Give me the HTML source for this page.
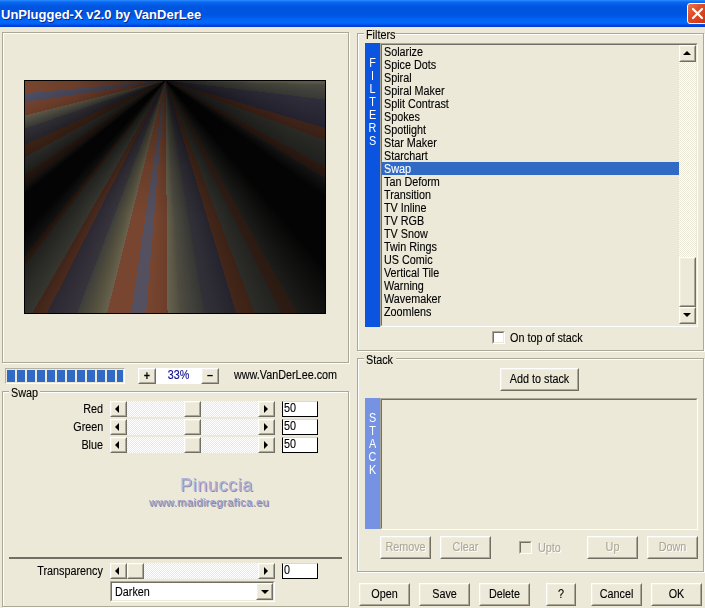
<!DOCTYPE html>
<html>
<head>
<meta charset="utf-8">
<title>UnPlugged-X v2.0 by VanDerLee</title>
<style>
html,body{margin:0;padding:0;}
body{width:705px;height:608px;overflow:hidden;background:#ece9d8;position:relative;
  font-family:"Liberation Sans",sans-serif;font-size:12px;color:#000;line-height:13px;}
body *{position:absolute;box-sizing:border-box;}
#title{left:0;top:0;width:705px;height:27px;
  background:linear-gradient(to bottom,#2b8cff 0px,#0a6af0 2px,#0560e8 4px,#0055e0 7px,#0055e0 15px,#0064f4 19px,#0068fa 23px,#0050e6 25px,#003ad6 26px,#0038d0 27px);}
#title span{left:1px;top:6.5px;color:#fff;font-weight:bold;font-size:13px;line-height:16px;white-space:nowrap;text-shadow:1px 1px 0 #0a2a90;}
#close{left:687px;top:3px;width:21px;height:21px;border:1px solid #fff;border-radius:3px;
  background:linear-gradient(135deg,#ea7650 0%,#e04c26 40%,#c83410 100%);}
.grp{border:1px solid #fff;}
.grp:before{content:"";position:absolute;left:-2px;top:-2px;right:0;bottom:0;border:1px solid #aca899;}
.lbl{background:#ece9d8;height:13px;}
.t{-webkit-text-stroke:0.12px currentColor;white-space:nowrap;transform:scaleX(0.9);transform-origin:0 50%;height:13px;}
.r{transform-origin:100% 50%;text-align:right;}
.c{transform-origin:50% 50%;text-align:center;left:0;right:0;}
.btn{background:#ece9d8;border:1px solid;border-color:#fff #716f64 #716f64 #fff;}
.btn:before{content:"";position:absolute;left:0;top:0;right:0;bottom:0;border:1px solid;border-color:#f1efe2 #aca899 #aca899 #f1efe2;}
.dis .t{color:#aca899;text-shadow:1px 1px 0 #fff;}
.sunk{border:1px solid;border-color:#aca899 #fff #fff #aca899;}
.sunk:before{content:"";position:absolute;left:0;top:0;right:0;bottom:0;border:1px solid;border-color:#716f64 #ece9d8 #ece9d8 #716f64;}
.track{background:repeating-conic-gradient(#fff 0% 25%, #ece9d8 0% 50%) 0 0/2px 2px;}
.edit{background:#fff;border:1px solid #000;border-top-color:#dddacb;width:36px;height:16px;}
.edit .t{left:1px;top:0px;}
.al{width:0;height:0;border-style:solid;border-width:4px 4px 4px 0;border-color:transparent #000 transparent transparent;}
.ar{width:0;height:0;border-style:solid;border-width:4px 0 4px 4px;border-color:transparent transparent transparent #000;}
.au{width:0;height:0;border-style:solid;border-width:0 4px 4px 4px;border-color:transparent transparent #000 transparent;}
.ad{width:0;height:0;border-style:solid;border-width:4px 4px 0 4px;border-color:#000 transparent transparent transparent;}
.v{color:#fff;left:0;width:15px;text-align:center;transform:scaleX(0.9);height:13px;}
.chk{width:13px;height:13px;background:#fff;border:1px solid;border-color:#aca899 #fff #fff #aca899;}
.chk:before{content:"";position:absolute;left:0;top:0;right:0;bottom:0;border:1px solid;border-color:#716f64 #ece9d8 #ece9d8 #716f64;}
</style>
</head>
<body>
<div id="title"><span>UnPlugged-X v2.0 by VanDerLee</span>
<div id="close"><svg style="left:0;top:0" width="19" height="19" viewBox="0 0 19 19"><path d="M5 5 L14 14 M14 5 L5 14" stroke="#fff" stroke-width="2.2" stroke-linecap="round"/></svg></div></div>
<div class="grp" style="left:3px;top:33px;width:347px;height:331px;"></div>
<div id="pv" style="left:24px;top:80px;width:302px;height:234px;background:#000;overflow:hidden;"><div id="rays" style="left:1px;top:1px;width:300px;height:232px;filter:blur(0.7px);background:radial-gradient(circle at 140.5px -0.5px, rgba(0,0,0,0.6) 0px, rgba(0,0,0,0.35) 40px, rgba(0,0,0,0.12) 90px, rgba(0,0,0,0) 140px), conic-gradient(from 90deg at 140.5px -0.5px, #615c48 0deg, #565240 1.4deg, #4a4a40 1.4deg, #383836 6.8deg, #302e3a 6.8deg, #24222e 16.6deg, #40241a 16.6deg, #3a2014 20.5deg, #2a2a26 20.5deg, #20201e 28.3deg, #2c1a12 28.3deg, #22140e 31.5deg, #141414 31.5deg, #050505 36deg, #040404 36deg, #040404 50deg, #050505 50deg, #1c1c1a 60.5deg, #2a1a12 60.5deg, #2e1c14 63.5deg, #222220 63.5deg, #2c2c28 69deg, #3c2216 69deg, #44261a 73.1deg, #25232d 73.1deg, #333138 80.6deg, #363634 80.6deg, #504e42 86.7deg, #545142 86.7deg, #68624e 89.5deg, #6c3e2a 89.5deg, #784630 94.8deg, #55505f 94.8deg, #55505f 98.4deg, #784630 98.4deg, #784630 104.1deg, #68624e 104.1deg, #56523f 106.8deg, #56523f 106.8deg, #3e3e3a 110.8deg, #38343c 110.8deg, #2c2832 117deg, #4a2a1c 117deg, #40241a 119.8deg, #363630 119.8deg, #20201e 127.2deg, #2a1a10 127.2deg, #1e120c 128.8deg, #121212 128.8deg, #040404 133deg, #040404 133deg, #040404 141deg, #040404 141deg, #121212 143.3deg, #1a100b 143.3deg, #261810 146.5deg, #1e1e1c 146.5deg, #2a2a28 151.4deg, #341e12 151.4deg, #3a2216 155.5deg, #25232a 155.5deg, #323036 161.1deg, #383836 161.1deg, #5e5a48 166deg, #6a3c28 166deg, #744230 171.2deg, #4a4a60 171.2deg, #504e62 174.8deg, #784630 174.8deg, #784630 180deg, #000 180deg, #000 360deg);"></div></div>
<div style="left:5px;top:368px;width:120px;height:16px;border:1px solid;border-color:#b5b19f #fff #fff #b5b19f;"></div>
<div style="left:7px;top:370px;width:116px;height:12px;background:repeating-linear-gradient(to right,#316ac5 0,#316ac5 8px,transparent 8px,transparent 10px);"></div>
<div class="btn" style="left:138px;top:368px;width:18px;height:16px;"><span class="t c" style="top:1px;font-weight:bold;">+</span></div>
<div style="left:156px;top:368px;width:45px;height:16px;background:#fff;"><span class="t c" style="top:1px;color:#10108a;">33%</span></div>
<div class="btn" style="left:201px;top:368px;width:18px;height:16px;"><span class="t c" style="top:0px;font-weight:bold;">&#8211;</span></div>
<span class="t" style="left:234px;top:369px;">www.VanDerLee.com</span>
<div class="grp" style="left:3px;top:392px;width:347px;height:216px;"></div>
<div class="lbl" style="left:9px;top:387px;width:31px;"><span class="t" style="left:2px;top:0;">Swap</span></div>
<span class="t r" style="right:602px;top:403px;">Red</span>
<div class="track" style="left:110px;top:401px;width:165px;height:16px;"></div>
<div class="btn" style="left:110px;top:401px;width:17px;height:16px;"><i class="al" style="left:4px;top:2.5px;"></i></div>
<div class="btn" style="left:258px;top:401px;width:17px;height:16px;"><i class="ar" style="left:5px;top:2.5px;"></i></div>
<div class="btn" style="left:184px;top:401px;width:17px;height:16px;"></div>
<div class="edit" style="left:282px;top:401px;"><span class="t">50</span></div>
<span class="t r" style="right:602px;top:421px;">Green</span>
<div class="track" style="left:110px;top:419px;width:165px;height:16px;"></div>
<div class="btn" style="left:110px;top:419px;width:17px;height:16px;"><i class="al" style="left:4px;top:2.5px;"></i></div>
<div class="btn" style="left:258px;top:419px;width:17px;height:16px;"><i class="ar" style="left:5px;top:2.5px;"></i></div>
<div class="btn" style="left:184px;top:419px;width:17px;height:16px;"></div>
<div class="edit" style="left:282px;top:419px;"><span class="t">50</span></div>
<span class="t r" style="right:602px;top:439px;">Blue</span>
<div class="track" style="left:110px;top:437px;width:165px;height:16px;"></div>
<div class="btn" style="left:110px;top:437px;width:17px;height:16px;"><i class="al" style="left:4px;top:2.5px;"></i></div>
<div class="btn" style="left:258px;top:437px;width:17px;height:16px;"><i class="ar" style="left:5px;top:2.5px;"></i></div>
<div class="btn" style="left:184px;top:437px;width:17px;height:16px;"></div>
<div class="edit" style="left:282px;top:437px;"><span class="t">50</span></div>
<div style="left:9px;top:557px;width:333px;height:2px;background:#716f64;"></div>
<span class="t r" style="right:602px;top:565px;">Transparency</span>
<div class="track" style="left:110px;top:563px;width:165px;height:16px;"></div>
<div class="btn" style="left:110px;top:563px;width:17px;height:16px;"><i class="al" style="left:4px;top:2.5px;"></i></div>
<div class="btn" style="left:258px;top:563px;width:17px;height:16px;"><i class="ar" style="left:5px;top:2.5px;"></i></div>
<div class="btn" style="left:127px;top:563px;width:17px;height:16px;"></div>
<div class="edit" style="left:282px;top:563px;"><span class="t">0</span></div>
<div class="sunk" style="left:110px;top:581px;width:165px;height:21px;background:#fff;"><span class="t" style="left:4px;top:4px;">Darken</span>
<div class="btn" style="left:145px;top:1px;width:17px;height:17px;"><i class="ad" style="left:4px;top:6px;"></i></div></div>
<span id="wm1" style="left:180px;top:474px;font-size:18px;line-height:22px;letter-spacing:0.6px;color:#b4b4dc;text-shadow:1px 1px 0 #8c8cb4;white-space:nowrap;">Pinuccia</span>
<span id="wm2" style="left:149px;top:496px;font-size:11px;line-height:13px;letter-spacing:0.45px;color:#9c9cc4;text-shadow:1px 1px 0 #7c7ca4;white-space:nowrap;">www.maidiregrafica.eu</span>
<div class="grp" style="left:358px;top:34px;width:347px;height:318px;"></div>
<div class="lbl" style="left:364px;top:29px;width:31px;"><span class="t" style="left:2px;top:0;">Filters</span></div>
<div style="left:365px;top:43px;width:16px;height:284px;background:#0a54e0;">
<span class="v" style="top:14px;">F</span>
<span class="v" style="top:27px;">I</span>
<span class="v" style="top:40px;">L</span>
<span class="v" style="top:53px;">T</span>
<span class="v" style="top:66px;">E</span>
<span class="v" style="top:79px;">R</span>
<span class="v" style="top:92px;">S</span>
</div>
<div class="sunk" style="left:380px;top:43px;width:318px;height:284px;"></div>
<div style="left:382px;top:162px;width:297px;height:13px;background:#316ac5;"></div>
<span class="t" style="left:384px;top:46px;">Solarize</span>
<span class="t" style="left:384px;top:59px;">Spice Dots</span>
<span class="t" style="left:384px;top:72px;">Spiral</span>
<span class="t" style="left:384px;top:85px;">Spiral Maker</span>
<span class="t" style="left:384px;top:98px;">Split Contrast</span>
<span class="t" style="left:384px;top:111px;">Spokes</span>
<span class="t" style="left:384px;top:124px;">Spotlight</span>
<span class="t" style="left:384px;top:137px;">Star Maker</span>
<span class="t" style="left:384px;top:150px;">Starchart</span>
<span class="t" style="left:384px;top:163px; color:#fff;">Swap</span>
<span class="t" style="left:384px;top:176px;">Tan Deform</span>
<span class="t" style="left:384px;top:189px;">Transition</span>
<span class="t" style="left:384px;top:202px;">TV Inline</span>
<span class="t" style="left:384px;top:215px;">TV RGB</span>
<span class="t" style="left:384px;top:228px;">TV Snow</span>
<span class="t" style="left:384px;top:241px;">Twin Rings</span>
<span class="t" style="left:384px;top:254px;">US Comic</span>
<span class="t" style="left:384px;top:267px;">Vertical Tile</span>
<span class="t" style="left:384px;top:280px;">Warning</span>
<span class="t" style="left:384px;top:293px;">Wavemaker</span>
<span class="t" style="left:384px;top:306px;">Zoomlens</span>
<div class="track" style="left:679px;top:45px;width:17px;height:279px;"></div>
<div class="btn" style="left:679px;top:45px;width:17px;height:17px;"><i class="au" style="left:3px;top:5px;"></i></div>
<div class="btn" style="left:679px;top:257px;width:17px;height:50px;"></div>
<div class="btn" style="left:679px;top:307px;width:17px;height:17px;"><i class="ad" style="left:3px;top:5px;"></i></div>
<div class="chk" style="left:492px;top:331px;"></div>
<span class="t" style="left:510px;top:332px;">On top of stack</span>
<div class="grp" style="left:358px;top:359px;width:347px;height:214px;"></div>
<div class="lbl" style="left:364px;top:354px;width:32px;"><span class="t" style="left:2px;top:0;">Stack</span></div>
<div class="btn" style="left:500px;top:368px;width:79px;height:23px;"><span class="t c" style="top:4px;">Add to stack</span></div>
<div style="left:365px;top:398px;width:16px;height:131px;background:#7693e3;">
<span class="v" style="top:14px;">S</span>
<span class="v" style="top:27px;">T</span>
<span class="v" style="top:40px;">A</span>
<span class="v" style="top:53px;">C</span>
<span class="v" style="top:66px;">K</span>
</div>
<div class="sunk" style="left:380px;top:398px;width:318px;height:132px;"></div>
<div class="btn dis" style="left:380px;top:536px;width:51px;height:23px;"><span class="t c" style="top:4px;">Remove</span></div>
<div class="btn dis" style="left:440px;top:536px;width:51px;height:23px;"><span class="t c" style="top:4px;">Clear</span></div>
<div class="btn dis" style="left:587px;top:536px;width:51px;height:23px;"><span class="t c" style="top:4px;">Up</span></div>
<div class="btn dis" style="left:647px;top:536px;width:51px;height:23px;"><span class="t c" style="top:4px;">Down</span></div>
<div class="chk" style="left:519px;top:541px;background:#ece9d8;"></div>
<span class="dis" style="left:538px;top:542px;width:40px;height:13px;"><span class="t" style="left:0;top:0;">Upto</span></span>
<div class="btn" style="left:359px;top:583px;width:51px;height:23px;"><span class="t c" style="top:4px;">Open</span></div>
<div class="btn" style="left:419px;top:583px;width:51px;height:23px;"><span class="t c" style="top:4px;">Save</span></div>
<div class="btn" style="left:479px;top:583px;width:51px;height:23px;"><span class="t c" style="top:4px;">Delete</span></div>
<div class="btn" style="left:546px;top:583px;width:30px;height:23px;"><span class="t c" style="top:4px;">?</span></div>
<div class="btn" style="left:591px;top:583px;width:51px;height:23px;"><span class="t c" style="top:4px;">Cancel</span></div>
<div class="btn" style="left:651px;top:583px;width:51px;height:23px;"><span class="t c" style="top:4px;">OK</span></div>
</body>
</html>
